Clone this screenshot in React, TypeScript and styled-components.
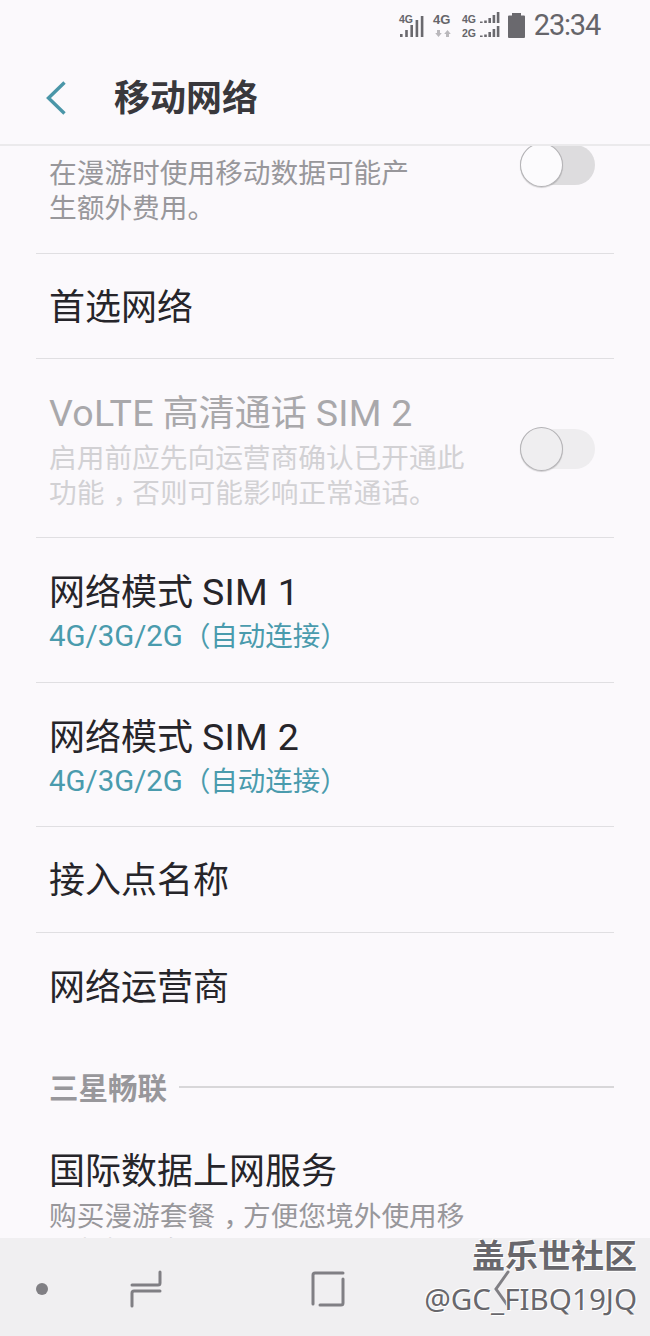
import React from 'react';
import styled, { createGlobalStyle } from 'styled-components';

const fontStack = `Roboto, 'Noto Sans CJK SC', sans-serif`;

const GlobalStyle = createGlobalStyle`
  html, body {
    margin: 0;
    padding: 0;
    background: #fbf9fc;
  }
`;

const Screen = styled.div`
  width: 650px;
  height: 1336px;
  display: flex;
  flex-direction: column;
  position: relative;
  overflow: hidden;
  background: #fbf9fc;
  font-family: ${fontStack};
`;

const StatusBar = styled.div`
  height: 54px;
  flex: none;
  display: flex;
  align-items: center;
  justify-content: flex-end;
  padding: 0 50px 4px 0;
  box-sizing: border-box;
  color: #66656a;
`;

const StatusIcon = styled.svg<{ $gap: number }>`
  display: block;
  overflow: visible;
  margin-right: ${props => props.$gap}px;
  fill: #6a696e;
`;

const SmallLabel = styled.text<{ $size?: number }>`
  font-family: 'Liberation Sans', sans-serif;
  font-weight: 700;
  font-size: ${props => props.$size ?? 10.5}px;
  fill: #66656a;
`;

const Clock = styled.span`
  font-size: 29px;
  line-height: 1;
  letter-spacing: -1.2px;
`;

const Header = styled.header`
  height: 92px;
  flex: none;
  display: flex;
  align-items: center;
  padding-left: 46px;
  box-sizing: border-box;
  border-bottom: 2px solid #ebeaec;
`;

const BackButton = styled.svg`
  display: block;
  margin: 0 47px 2px 0;
  fill: none;
  stroke: #4a96a8;
  stroke-width: 3.4;
`;

const HeaderTitle = styled.h1`
  margin: 0;
  font-size: 36px;
  line-height: 44px;
  font-weight: 700;
  color: #39383c;
`;

const List = styled.main`
  flex: 1;
  min-height: 0;
  overflow: hidden;
  padding: 0 36px;
`;

const Row = styled.div<{ $height: number; $plain?: boolean; $pullUp?: number }>`
  height: ${props => props.$height}px;
  margin-top: ${props => (props.$pullUp ? -props.$pullUp : 0)}px;
  box-sizing: border-box;
  padding: 0 14px 0 13px;
  display: flex;
  align-items: center;
  justify-content: space-between;
  border-bottom: ${props => (props.$plain ? 'none' : '1px solid #e0dfe2')};
`;

const RowText = styled.div`
  display: flex;
  flex-direction: column;
  width: 420px;
  padding-top: 6px;
`;

const Title = styled.div<{ $disabled?: boolean }>`
  font-size: 36px;
  line-height: 44px;
  white-space: nowrap;
  color: ${props => (props.$disabled ? '#a9a8ab' : '#26252a')};
`;

const SingleTitle = styled(Title)`
  margin-top: 3px;
`;

const TitleLatin = styled.span`
  font-size: 37.5px;
  letter-spacing: 0.3px;
`;

const Summary = styled.div<{ $disabled?: boolean }>`
  margin-top: 6px;
  font-size: 27.7px;
  line-height: 34.5px;
  color: ${props => (props.$disabled ? '#d2d1d4' : '#98979b')};
`;

// the device font centres the full-width comma in its cell
const Comma = styled.span`
  font-feature-settings: 'halt';
  margin: 0 6px 0 8px;
`;

const Value = styled.div`
  margin: 4px 0 2px;
  font-size: 27.5px;
  line-height: 35px;
  white-space: nowrap;
  color: #4a9bad;
`;

const ValueLatin = styled.span`
  font-size: 29.4px;
`;

const Toggle = styled.div<{ $disabled?: boolean }>`
  position: relative;
  flex: none;
  width: 75px;
  height: 40px;
  margin: 2px 5px 0 0;
  border-radius: 20px;
  background: ${props => (props.$disabled ? '#eeedef' : '#dddcde')};
`;

const Knob = styled.div<{ $disabled?: boolean }>`
  position: absolute;
  left: 0;
  top: -2px;
  width: 43px;
  height: 44px;
  box-sizing: border-box;
  border-radius: 50%;
  border: 1px solid #b4b3b6;
  background: ${props => (props.$disabled ? '#efeef0' : '#fcfbfd')};
  box-shadow: 0 1px 1px rgba(0, 0, 0, 0.16);
`;

const Section = styled.div`
  display: flex;
  align-items: center;
  gap: 12px;
  height: 50px;
  padding-left: 13px;
  margin-top: 22px;
  font-size: 29.5px;
  font-weight: 700;
  color: #98979b;
`;

const SectionLine = styled.div`
  flex: 1;
  height: 2px;
  margin-top: 2px;
  background: #d8d7d9;
`;

const NavBar = styled.nav`
  height: 98px;
  flex: none;
  background: #f0eff1;
  display: grid;
  grid-template-columns: 84px 124px 240px 108px 1fr;
  align-items: center;
  padding-top: 4px;
  box-sizing: border-box;
`;

const NavIcon = styled.svg`
  display: block;
  justify-self: center;
  fill: none;
  stroke: #807f84;
  stroke-width: 3;
  stroke-linecap: round;
`;

const Watermark = styled.div`
  position: absolute;
  right: 13px;
  bottom: 17px;
  display: flex;
  flex-direction: column;
  align-items: flex-end;
  color: #68676c;
  text-shadow: 0 0 1px #fff, 1px 1px 0 #fff, -1px -1px 0 #fff;
`;

const WatermarkName = styled.div`
  font-size: 33px;
  line-height: 44px;
  font-weight: 700;
`;

const WatermarkUser = styled.div`
  font-family: 'Noto Sans', sans-serif;
  font-size: 29.6px;
  line-height: 40px;
`;

const SignalBars = ({ x, bottom, heights, step }: { x: number; bottom: number; heights: number[]; step: number }) => (
  <>
    {heights.map((h, i) => (
      <rect key={i} x={x + i * step} y={bottom - h} width={2.6} height={h} />
    ))}
  </>
);

function StatusIcons() {
  return (
    <>
      <StatusIcon width={26} height={24} viewBox="0 0 26 24" $gap={8}>
        <SmallLabel x={0} y={10}>4G</SmallLabel>
        <SignalBars x={1} bottom={24} heights={[3, 7, 12, 17, 21]} step={5.2} />
      </StatusIcon>
      <StatusIcon width={20} height={24} viewBox="0 0 20 24" $gap={9}>
        <SmallLabel x={0} y={11} $size={13}>4G</SmallLabel>
        <path d="M4 17h3v3h1.800l-3.300 4-3.300-4H4zM13 24v-3h-1.800l3.300-4 3.300 4H16v3z" opacity={0.45} />
      </StatusIcon>
      <StatusIcon width={38} height={24} viewBox="0 0 38 24" $gap={8}>
        <SmallLabel x={0} y={10}>4G</SmallLabel>
        <SmallLabel x={0} y={24}>2G</SmallLabel>
        <SignalBars x={18} bottom={10} heights={[1.5, 2.5, 5, 8, 11]} step={4.2} />
        <SignalBars x={18} bottom={24} heights={[1.5, 2.5, 5, 8, 11]} step={4.2} />
      </StatusIcon>
      <StatusIcon width={17} height={25} viewBox="0 0 17 25" $gap={9}>
        <path d="M4 0h9v2.500h3a1 1 0 0 1 1 1V24a1 1 0 0 1-1 1H1a1 1 0 0 1-1-1V3.500a1 1 0 0 1 1-1h3z" />
      </StatusIcon>
    </>
  );
}

export default function App() {
  return (
    <Screen>
      <GlobalStyle />
      <StatusBar>
        <StatusIcons />
        <Clock>23:34</Clock>
      </StatusBar>
      <Header>
        <BackButton width={21} height={34} viewBox="0 0 21 34">
          <path d="M18.500 1.500 2.500 17l16 15.500" />
        </BackButton>
        <HeaderTitle>移动网络</HeaderTitle>
      </Header>
      <List>
        <Row $height={180} $pullUp={72}>
          <RowText>
            <Title>&nbsp;</Title>
            <Summary>
              在漫游时使用移动数据可能产
              <br />
              生额外费用。
            </Summary>
          </RowText>
          <Toggle>
            <Knob />
          </Toggle>
        </Row>
        <Row $height={105}>
          <SingleTitle>首选网络</SingleTitle>
        </Row>
        <Row $height={179}>
          <RowText>
            <Title $disabled>
              <TitleLatin>VoLTE</TitleLatin> 高清通话 <TitleLatin>SIM 2</TitleLatin>
            </Title>
            <Summary $disabled>
              启用前应先向运营商确认已开通此功能<Comma>，</Comma>否则可能影响正常通话。
            </Summary>
          </RowText>
          <Toggle $disabled>
            <Knob $disabled />
          </Toggle>
        </Row>
        <Row $height={145}>
          <RowText>
            <Title>
              网络模式 <TitleLatin>SIM 1</TitleLatin>
            </Title>
            <Value>
              <ValueLatin>4G/3G/2G</ValueLatin>（自动连接）
            </Value>
          </RowText>
        </Row>
        <Row $height={144}>
          <RowText>
            <Title>
              网络模式 <TitleLatin>SIM 2</TitleLatin>
            </Title>
            <Value>
              <ValueLatin>4G/3G/2G</ValueLatin>（自动连接）
            </Value>
          </RowText>
        </Row>
        <Row $height={106}>
          <SingleTitle>接入点名称</SingleTitle>
        </Row>
        <Row $height={106} $plain>
          <SingleTitle>网络运营商</SingleTitle>
        </Row>
        <Section>
          三星畅联
          <SectionLine />
        </Section>
        <Row $height={191} $plain>
          <RowText>
            <Title>国际数据上网服务</Title>
            <Summary>
              购买漫游套餐<Comma>，</Comma>方便您境外使用移动数据服务。
            </Summary>
          </RowText>
        </Row>
      </List>
      <NavBar>
        <NavIcon width={14} height={14} viewBox="0 0 14 14">
          <circle cx={7} cy={7} r={6} fill="#807f84" stroke="none" />
        </NavIcon>
        <NavIcon width={34} height={38} viewBox="0 0 34 38">
          <path d="M31 2v11a2 2 0 0 1-2 2H3M31 21H5a2 2 0 0 0-2 2v13" />
        </NavIcon>
        <NavIcon width={34} height={36} viewBox="0 0 34 36">
          <path d="M32 2H4a2 2 0 0 0-2 2v29M9 34h21a2 2 0 0 0 2-2V8" />
        </NavIcon>
        <NavIcon width={16} height={38} viewBox="0 0 16 38">
          <path d="M14 2 2 19l12 17" />
        </NavIcon>
        <span />
      </NavBar>
      <Watermark>
        <WatermarkName>盖乐世社区</WatermarkName>
        <WatermarkUser>@GC_FIBQ19JQ</WatermarkUser>
      </Watermark>
    </Screen>
  );
}
